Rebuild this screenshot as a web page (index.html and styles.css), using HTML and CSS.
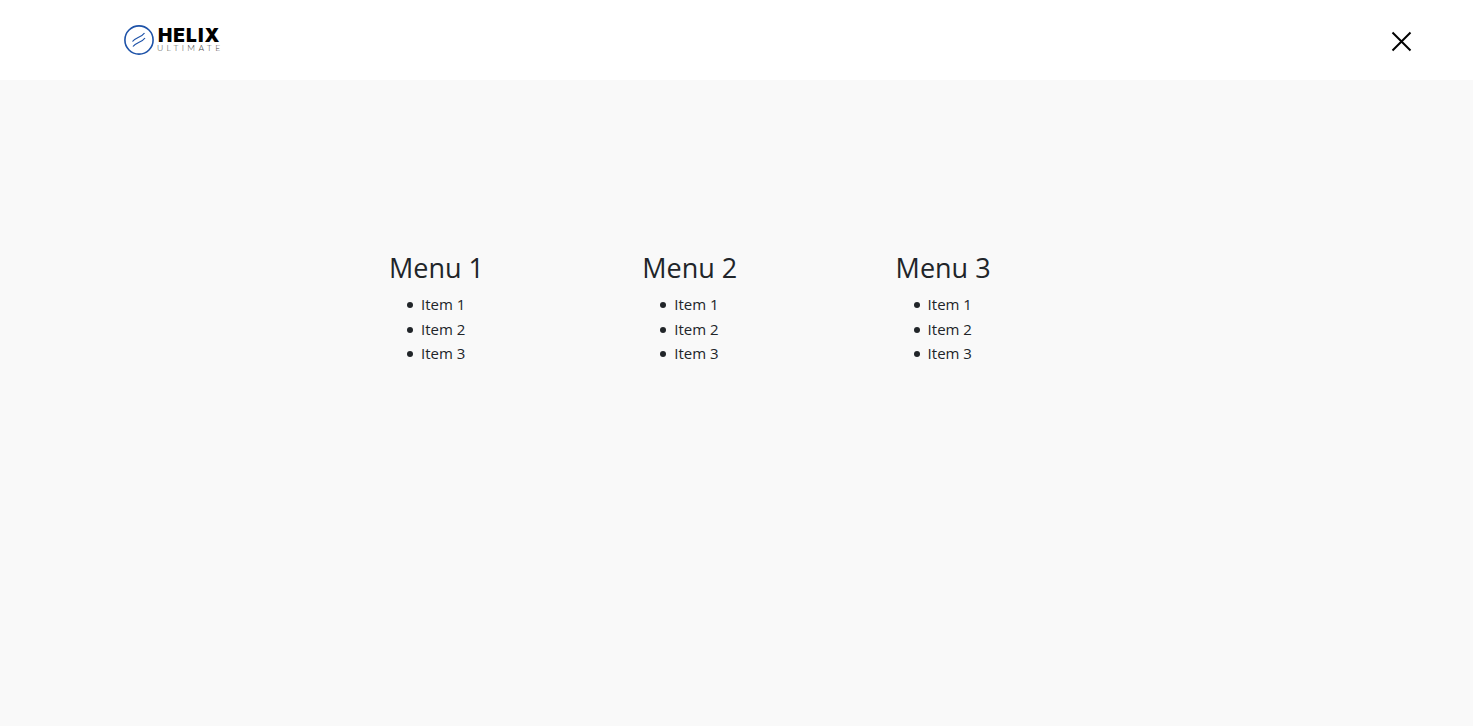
FILE: index.html
```html
<!DOCTYPE html>
<html lang="en">
<head>
    <meta charset="UTF-8">
    <meta name="viewport" content="width=device-width, initial-scale=1.0">
    <title>Helix Ultimate</title>
    <link rel="stylesheet" href="styles.css">
</head>
<body>
    <header class="header">
        <a class="logo" href="#">
            <svg class="logo-icon" viewBox="0 0 30 30">
                <circle cx="15" cy="15" r="14.1"/>
                <path d="M8.500 16.500C11 12.500 17.500 12.500 20.500 8"/>
                <path d="M9 21.500C11.500 17.500 18 17.500 21 13"/>
            </svg>
            <span class="logo-text">
                <span class="logo-name">HELIX</span>
                <span class="logo-sub">ULTIMATE</span>
            </span>
        </a>
        <button class="close-button" aria-label="Close">
            <svg viewBox="0 0 21 21">
                <path d="M1.500 1.500L19.500 19.500M19.500 1.500L1.500 19.500"/>
            </svg>
        </button>
    </header>

    <main class="menu">
        <div class="menu-column">
            <h3>Menu 1</h3>
            <ul>
                <li>Item 1</li>
                <li>Item 2</li>
                <li>Item 3</li>
            </ul>
        </div>
        <div class="menu-column">
            <h3>Menu 2</h3>
            <ul>
                <li>Item 1</li>
                <li>Item 2</li>
                <li>Item 3</li>
            </ul>
        </div>
        <div class="menu-column">
            <h3>Menu 3</h3>
            <ul>
                <li>Item 1</li>
                <li>Item 2</li>
                <li>Item 3</li>
            </ul>
        </div>
    </main>
</body>
</html>
```

FILE: styles.css
```css
* {
    box-sizing: border-box;
}
body {
    margin: 0;
    min-height: 100vh;
    background-color: #f9f9f9;
    color: #212529;
    font-family: "Segoe UI", "Open Sans", "Noto Sans", sans-serif;
    font-size: 15px;
}
.header {
    display: flex;
    align-items: center;
    justify-content: space-between;
    height: 80px;
    padding: 0 61px 0 124px;
    background-color: #fff;
}
.logo {
    display: flex;
    align-items: center;
    gap: 3px;
    color: #000;
    text-decoration: none;
}
.logo-icon {
    width: 30px;
    height: 30px;
    fill: none;
    stroke: #1d52a8;
    stroke-width: 1.6;
}
.logo-icon path {
    stroke-width: 1.2;
}
.logo-text {
    display: flex;
    flex-direction: column;
    font-family: Inter, sans-serif;
}
.logo-name {
    padding-left: 1px;
    font-size: 19px;
    font-weight: 900;
    line-height: 16px;
    letter-spacing: 1.1px;
}
.logo-sub {
    color: #444;
    font-family: Lato, sans-serif;
    font-size: 8.500px;
    font-weight: 300;
    line-height: 8px;
    letter-spacing: 3.4px;
}
.close-button {
    display: flex;
    padding: 3px 0 0;
    border: none;
    background: none;
    cursor: pointer;
}
.close-button svg {
    width: 21px;
    height: 21px;
    stroke: #000;
    stroke-width: 2;
}
.menu {
    display: grid;
    grid-template-columns: repeat(3, 253.300px);
    padding: 171px 0 0 389px;
}
.menu h3 {
    margin: 0 0 7px;
    font-size: 27px;
    font-weight: 400;
    line-height: 34px;
}
.menu ul {
    margin: 0;
    padding-left: 18px;
    list-style: none;
}
.menu li {
    display: flex;
    align-items: center;
    gap: 8px;
    line-height: 24.500px;
}
.menu li::before {
    content: "";
    width: 6px;
    height: 6px;
    margin-top: 2px;
    border-radius: 50%;
    background-color: #212529;
}
```
